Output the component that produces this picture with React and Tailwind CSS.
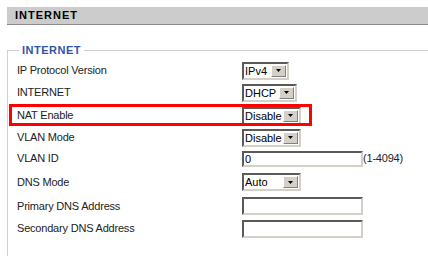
import React from 'react';

const FONT = "font-['Liberation_Sans',Arial,sans-serif]";

// Classic sunken select with a raised arrow button
const Select = ({ value, width }) => (
  <div
    className={`flex h-[18px] bg-white border-2 border-t-[#5a5a5a] border-l-[#5a5a5a] border-b-[#d4d0c8] border-r-[#d4d0c8] ${width}`}
  >
    <span className="flex-1 pl-[1px] text-[11px] leading-[14px] text-black">{value}</span>
    <span className="my-[1px] mr-[1px] w-[15px] flex items-center justify-center bg-[#d4d0c8] border border-t-white border-l-white border-b-[#808080] border-r-[#808080]">
      <svg width="5" height="3" viewBox="0 0 5 3">
        <path d="M0 0h5L2.5 3z" fill="#000" />
      </svg>
    </span>
  </div>
);

const TextBox = ({ value = '', height = 'h-[18px]' }) => (
  <div
    className={`w-[121px] ${height} bg-white border-2 border-t-[#5a5a5a] border-l-[#5a5a5a] border-b-[#d4d0c8] border-r-[#d4d0c8] pl-[1px] text-[11px] leading-[12px] text-black`}
  >
    {value}
  </div>
);

const rows = [
  { label: 'IP Protocol Version', h: 'h-[21px]', control: <Select value="IPv4" width="w-[47px]" /> },
  { label: 'INTERNET', h: 'h-[23px]', control: <Select value="DHCP" width="w-[55px]" /> },
  { label: 'NAT Enable', h: 'h-[23px]', control: <Select value="Disable" width="w-[59px]" /> },
  { label: 'VLAN Mode', h: 'h-[21px]', control: <Select value="Disable" width="w-[59px]" /> },
  {
    label: 'VLAN ID',
    h: 'h-[21px]',
    control: (
      <div className="flex items-center">
        <TextBox value="0" height="h-[16px]" />
        <span className="text-[11px] tracking-[-0.2px] text-[#222]">(1-4094)</span>
      </div>
    ),
  },
  { label: 'DNS Mode', h: 'h-[26px]', control: <Select value="Auto" width="w-[59px]" /> },
  { label: 'Primary DNS Address', h: 'h-[22px]', control: <TextBox /> },
  { label: 'Secondary DNS Address', h: 'h-[23px]', control: <TextBox /> },
];

const App = () => {
  return (
    <div className={`w-[428px] h-[256px] bg-white overflow-hidden ${FONT}`}>
      {/* Section title bar */}
      <div className="mt-[7px] ml-[7px] h-[18px] bg-[#cccccc] border-b border-[#8c8c8c] pl-[8px] text-[11px] leading-[17px] font-bold tracking-[1px] text-black">
        INTERNET
      </div>

      {/* Group box */}
      <fieldset className="relative mt-[19px] ml-[7px] border-0 border-t border-l border-[#d0d0d0] p-0 h-[220px]">
        <legend className="ml-[11px] px-[3px] text-[11px] leading-[13px] font-bold tracking-[0.5px] text-[#2f55a8]">
          INTERNET
        </legend>
        <div className="pt-[3px]">
          {rows.map((row) => (
            <div key={row.label} className={`flex items-center ${row.h}`}>
              <span className="w-[234px] pl-[9px] text-[11px] tracking-[-0.2px] text-[#222]">{row.label}</span>
              {row.control}
            </div>
          ))}
        </div>

        {/* Highlight annotation */}
        <div className="absolute left-[1px] top-[47px] w-[303px] h-[22px] border-[3px] border-[#ff0000]" />
      </fieldset>
    </div>
  );
};

export default App;
